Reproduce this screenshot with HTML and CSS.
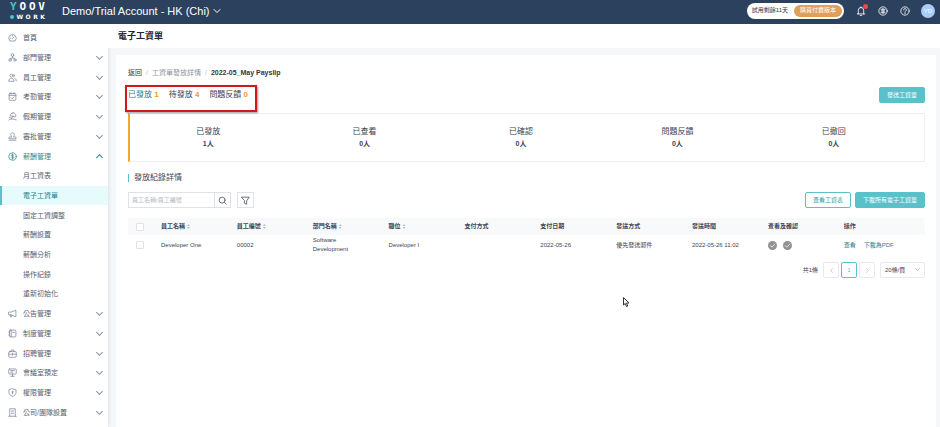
FILE: index.html
```html
<!DOCTYPE html>
<html lang="zh-Hant">
<head>
  <meta charset="UTF-8">
  <meta name="viewport" content="width=device-width, initial-scale=1">
  <title>電子工資單</title>
  <link rel="stylesheet" href="styles.css">
</head>
<body>

<header class="topbar">
  <a class="logo" href="#" aria-label="YOOV WORK">
    <span class="logo-top"><span class="teal">Y</span><span>O</span><span>O</span><span>V</span></span>
    <span class="logo-sub"><i class="dot"></i><span>W</span><span>O</span><span>R</span><span>K</span></span>
  </a>
  <button class="account">Demo/Trial Account - HK (Chi)
    <svg class="arrow" viewBox="0 0 8 8"><path d="M1 2.5l3 3 3-3"/></svg>
  </button>
  <div class="top-right">
    <div class="trial"><span>試用剩餘11天</span><button>購買付費版本</button></div>
    <button class="icon-btn bell" aria-label="通知">
      <svg viewBox="0 0 12 12"><path d="M1.5 9.5h9M2.8 9.5V5a3.2 3.2 0 0 1 6.4 0v4.5M5 11.2h2M6 1v1"/></svg>
      <i class="badge"></i>
    </button>
    <button class="icon-btn lang" aria-label="語言">
      <svg viewBox="0 0 12 12"><circle cx="6" cy="6" r="5"/><path d="M3.6 4h4.8M4 6h4M3.6 8h4.8M6 3v6"/></svg>
    </button>
    <button class="icon-btn" aria-label="說明">
      <svg viewBox="0 0 12 12"><circle cx="6" cy="6" r="5"/><path d="M4.4 4.8a1.6 1.6 0 1 1 2.4 1.3c-.6.4-.8.6-.8 1.2M6 8.3v.9"/></svg>
    </button>
    <span class="avatar">YD</span>
  </div>
</header>

<div class="layout">
  <nav class="sidebar">
    <a class="item" href="#"><svg viewBox="0 0 12 12"><path d="M2.3 10.3a5 5 0 1 1 7.4 0zM6 7.5l2-2.3M3 7h.8M6 3.3v.8"/></svg>首頁</a>
    <a class="item more" href="#"><svg viewBox="0 0 12 12"><circle cx="6" cy="2.7" r="1.8"/><circle cx="2.7" cy="9.3" r="1.6"/><circle cx="9.3" cy="9.3" r="1.6"/><path d="M6 4.5v2M2.7 7.7c0-1.6 6.6-1.6 6.6 0"/></svg>部門管理</a>
    <a class="item more" href="#"><svg viewBox="0 0 12 12"><circle cx="4.5" cy="3.5" r="2"/><path d="M1 10.5c0-4.5 7-4.5 7 0zM7.5 1.7a2 2 0 0 1 0 3.7M9 7c1.5.5 2 2 2 3.5"/></svg>員工管理</a>
    <a class="item more" href="#"><svg viewBox="0 0 12 12"><rect x="1.5" y="2" width="9" height="9" rx="1"/><path d="M1.5 4.5h9M4 .8v2M8 .8v2M4 7.5l1.5 1.5 2.8-2.7"/></svg>考勤管理</a>
    <a class="item more" href="#"><svg viewBox="0 0 12 12"><path d="M3 4.5a3.8 3.8 0 0 1 7-1.5c.8 1.3.5 2.5 0 3.2zM6.5 5.2L4.5 9M1 10.5c1.5-2 3 0 4.5-1s3 1 5.5 1M1.5 7.5h2M7 1l-1 1"/></svg>假期管理</a>
    <a class="item more" href="#"><svg viewBox="0 0 12 12"><path d="M4.8 6.5C2.5 3.5 4 1 6 1s3.5 2.5 1.2 5.5h2.3a1.2 1.2 0 0 1 1.2 1.2V9H1.3V7.7a1.2 1.2 0 0 1 1.2-1.2zM1.5 11h9"/></svg>審批管理</a>
    <a class="item more open" href="#"><svg viewBox="0 0 12 12"><circle cx="6" cy="6" r="5"/><path d="M7.8 4.3C7 3.2 4.3 3.3 4.3 4.8s3.5.9 3.5 2.5-3 1.6-3.7.4M6 2.5v7"/></svg>薪酬管理</a>
    <a class="item sub" href="#">月工資表</a>
    <a class="item sub active" href="#">電子工資單</a>
    <a class="item sub" href="#">固定工資調整</a>
    <a class="item sub" href="#">薪酬設置</a>
    <a class="item sub" href="#">薪酬分析</a>
    <a class="item sub" href="#">操作紀錄</a>
    <a class="item sub" href="#">重新初始化</a>
    <a class="item more" href="#"><svg viewBox="0 0 12 12"><path d="M1 4.2h3l6.500-2.700v9L4 7.800H1zM3 7.800v2.700h2V8.300"/></svg>公告管理</a>
    <a class="item more" href="#"><svg viewBox="0 0 12 12"><rect x="2" y="1.5" width="8.5" height="9" rx="1"/><path d="M4.3 1.5v9M6.500 4.500h2M1 4h1.500M1 8h1.500"/></svg>制度管理</a>
    <a class="item more" href="#"><svg viewBox="0 0 12 12"><rect x="1" y="3.5" width="10" height="7.5" rx="1"/><path d="M4 3.5v-2h4v2M1 7h3M8 7h3M6 5.800v2.400M5 7h2"/></svg>招聘管理</a>
    <a class="item more" href="#"><svg viewBox="0 0 12 12"><rect x="1" y="1.3" width="10" height="6.7" rx="1"/><path d="M6 8v3M3.5 11h5M3.5 3.5h5M3.5 5.5h3"/></svg>會議室預定</a>
    <a class="item more" href="#"><svg viewBox="0 0 12 12"><path d="M6 1l4.7 1.5v3.5c0 2.5-2 4.2-4.7 5.2C3.3 10.2 1.3 8.5 1.3 6V2.5z"/><circle cx="6" cy="5.3" r=".8"/><path d="M6 6.3v1.5"/></svg>權限管理</a>
    <a class="item more" href="#"><svg viewBox="0 0 12 12"><path d="M2.3 11V1h7.4v10M1 11h10M4.5 4h3M4.5 7h3"/></svg>公司/團隊設置</a>
  </nav>

  <main class="main">
    <h1 class="page-title">電子工資單</h1>

    <section class="card">
      <div class="crumbs">
        <a href="#">返回</a><span class="sep">/</span><span class="grey">工資單發放詳情</span><span class="sep">/</span><b>2022-05_May Payslip</b>
      </div>

      <div class="tabs-row">
        <div class="tabs">
          <a class="tab active" href="#">已發放 <b>1</b></a>
          <a class="tab" href="#">待發放 <b>4</b></a>
          <a class="tab" href="#">問題反饋 <b>0</b></a>
          <i class="highlight"></i>
        </div>
        <button class="btn primary">發送工資單</button>
      </div>

      <div class="stats">
        <div class="stat"><span>已發放</span><b>1人</b></div>
        <div class="stat"><span>已查看</span><b>0人</b></div>
        <div class="stat"><span>已確認</span><b>0人</b></div>
        <div class="stat"><span>問題反饋</span><b>0人</b></div>
        <div class="stat"><span>已撤回</span><b>0人</b></div>
      </div>

      <h2 class="section-title">發放紀錄詳情</h2>

      <div class="toolbar">
        <div class="search">
          <input type="text" placeholder="員工名稱/員工編號" aria-label="員工名稱/員工編號">
          <button aria-label="搜尋"><svg viewBox="0 0 12 12"><circle cx="5.5" cy="5.5" r="4"/><path d="M8.5 8.5L11 11"/></svg></button>
        </div>
        <button class="filter" aria-label="篩選"><svg viewBox="0 0 12 12"><path d="M1 1.5h10l-3.5 5V11l-3-1.5v-3z"/></svg></button>
        <div class="actions">
          <button class="btn">查看工資表</button>
          <button class="btn primary">下載所有電子工資單</button>
        </div>
      </div>

      <table class="records">
        <thead>
          <tr>
            <th class="check"><input type="checkbox" aria-label="全選"></th>
            <th>員工名稱<i class="sort"></i></th>
            <th>員工編號<i class="sort"></i></th>
            <th>部門名稱<i class="sort"></i></th>
            <th>職位<i class="sort"></i></th>
            <th>支付方式</th>
            <th>支付日期</th>
            <th>發送方式</th>
            <th>發送時間</th>
            <th>查看及確認</th>
            <th class="ops">操作</th>
          </tr>
        </thead>
        <tbody>
          <tr>
            <td class="check"><input type="checkbox" aria-label="Developer One"></td>
            <td>Developer One</td>
            <td>00002</td>
            <td>Software Development</td>
            <td>Developer I</td>
            <td></td>
            <td>2022-05-26</td>
            <td>優先發送郵件</td>
            <td>2022-05-26 11:02</td>
            <td>
              <div class="ticks">
                <svg viewBox="0 0 12 12"><circle cx="6" cy="6" r="6"/><path d="M3.2 6.2l2 2 3.8-4"/></svg>
                <svg viewBox="0 0 12 12"><circle cx="6" cy="6" r="6"/><path d="M3.2 6.2l2 2 3.8-4"/></svg>
              </div>
            </td>
            <td class="ops"><a href="#">查看</a><a href="#">下載為PDF</a></td>
          </tr>
        </tbody>
      </table>

      <div class="pager">
        <span class="total">共1條</span>
        <button disabled aria-label="上一頁"><svg viewBox="0 0 8 8"><path d="M5.5 1l-3 3 3 3"/></svg></button>
        <button class="current">1</button>
        <button disabled aria-label="下一頁"><svg viewBox="0 0 8 8"><path d="M2.5 1l3 3-3 3"/></svg></button>
        <div class="page-size">
          <select aria-label="每頁條數"><option>20條/頁</option></select>
          <svg class="arrow" viewBox="0 0 8 8"><path d="M1 2.5l3 3 3-3"/></svg>
        </div>
      </div>
    </section>
  </main>
</div>

<svg class="cursor" viewBox="0 0 12 20"><path d="M1 1v14l3.5-3 2.5 6 2.5-1L7 11h4.5z"/></svg>

</body>
</html>
```
FILE: styles.css
```css
* {
  box-sizing: border-box;
}
body {
  margin: 0;
  min-height: 100vh;
  display: flex;
  flex-direction: column;
  font-family: "Liberation Sans", "Noto Sans CJK TC", sans-serif;
  font-size: 6px;
  line-height: 9px;
  color: #3c4453;
  background: #f5f7f9;
}
a {
  color: inherit;
  text-decoration: none;
}
button, input, select {
  font: inherit;
  color: inherit;
  margin: 0;
  padding: 0;
  border: 0;
  background: none;
}
svg {
  fill: none;
  stroke: currentColor;
  stroke-linecap: round;
  stroke-linejoin: round;
  display: block;
  flex: none;
}
.arrow {
  width: 8px;
  height: 8px;
}

/* top bar */
.topbar {
  height: 24px;
  flex: none;
  display: flex;
  align-items: center;
  padding: 0 5px 3px 10px;
  background: #2c415e;
  color: #fff;
}
.logo {
  width: 35px;
  margin-right: 17px;
  font-weight: bold;
}
.logo-top, .logo-sub {
  display: flex;
  align-items: center;
  justify-content: space-between;
}
.logo-top {
  font-family: "DejaVu Sans Mono", monospace;
  font-size: 11px;
  line-height: 12px;
}
.logo-sub {
  font-family: "DejaVu Sans", sans-serif;
  font-size: 6px;
  line-height: 7px;
}
.teal {
  color: #4fc3cf;
}
.dot {
  width: 4px;
  height: 4px;
  border-radius: 50%;
  background: #4fc3cf;
}
.account {
  display: flex;
  align-items: center;
  gap: 3px;
  font-size: 11px;
  line-height: 14px;
}
.top-right {
  margin-left: auto;
  display: flex;
  align-items: center;
  gap: 10px;
}
.trial {
  display: flex;
  align-items: center;
  gap: 6px;
  height: 16px;
  padding: 0 2px 0 5px;
  border-radius: 8px;
  background: #fff;
  color: #2c3444;
}
.trial button {
  height: 12px;
  padding: 0 6px;
  border-radius: 6px;
  background: #dfa05a;
  color: #fff;
}
.icon-btn {
  position: relative;
  width: 12px;
}
.icon-btn svg {
  width: 10px;
  height: 10px;
  margin: 0 auto;
}
.bell {
  margin-left: 1px;
}
.badge {
  position: absolute;
  top: -2px;
  right: -1px;
  width: 5px;
  height: 5px;
  border-radius: 50%;
  background: #f0444c;
}
.avatar {
  width: 14px;
  height: 14px;
  border-radius: 50%;
  background: #a9cdfa;
  font-size: 6px;
  line-height: 14px;
  text-align: center;
}

.layout {
  flex: 1;
  display: flex;
}

/* side menu */
.sidebar {
  width: 108px;
  height: calc(100vh - 24px);
  flex: none;
  display: flex;
  flex-direction: column;
  padding: 4px 0 5px;
  background: #fff;
  box-shadow: 0 0 4px rgba(40, 60, 90, 0.18);
  font-size: 7px;
  color: #56606d;
}
.item {
  height: 20px;
  min-height: 18px;
  display: flex;
  align-items: center;
  gap: 6px;
  padding: 0 6px 0 8px;
}
.item svg {
  width: 9px;
  height: 9px;
  color: #7c8795;
}
.more::after {
  content: "";
  width: 4px;
  height: 4px;
  margin: -2px 0 0 auto;
  border: solid #8b95a2;
  border-width: 0 1px 1px 0;
  transform: rotate(45deg);
}
.open, .open svg {
  color: #2f8b92;
}
.open::after {
  margin-top: 2px;
  border-color: #2f8b92;
  transform: rotate(225deg);
}
.sub {
  padding-left: 23px;
}
.active.sub {
  padding-left: 21px;
  border-left: 2px solid #5ac1cb;
  background: #e6fcfc;
  color: #1f7f87;
}

/* content */
.main {
  flex: 1;
  min-width: 0;
  display: flex;
  flex-direction: column;
}
.page-title {
  margin: 0;
  padding: 0 10px;
  background: #fff;
  font-size: 9px;
  line-height: 24px;
  color: #1f2532;
}
.card {
  flex: 1;
  margin: 7px 4px 0 8px;
  padding: 12px 11px 0 12px;
  background: #fff;
}
.crumbs {
  display: flex;
  font-size: 7px;
  line-height: 11px;
  color: #2f3746;
}
.sep {
  margin: 0 4px;
  color: #c0c4ca;
}
.grey {
  color: #8f959d;
}
.tabs-row {
  display: flex;
  align-items: center;
  justify-content: space-between;
  margin-top: 9px;
}
.tabs {
  position: relative;
  display: flex;
  gap: 10px;
  font-size: 8px;
  line-height: 12px;
}
.tab b {
  color: #f7981d;
}
.tab.active {
  color: #1f7f87;
}
.highlight {
  position: absolute;
  inset: -4px -9px -11px -3px;
  border: 2px solid #d0181f;
  box-shadow: 1px 1px 2px rgba(0, 0, 0, 0.4);
}
.btn {
  height: 16px;
  padding: 0 7px;
  border: 1px solid #5ac1cb;
  border-radius: 2px;
  background: #fff;
  color: #2f9aa4;
}
.btn.primary {
  background: #5ac1cb;
  color: #fff;
}
.stats {
  display: flex;
  margin-top: 10px;
  padding: 12px 12px 12px 0;
  border: 1px solid #eceff2;
  border-left: 2px solid #f5a52c;
}
.stat {
  flex: 1;
  display: flex;
  flex-direction: column;
  align-items: center;
  font-size: 8px;
  line-height: 12px;
}
.stat b {
  font-size: 7px;
  line-height: 11px;
}
.section-title {
  margin: 12px 0 10px;
  padding-left: 5px;
  border-left: 1px solid #4fc3cf;
  font-size: 8px;
  font-weight: normal;
  line-height: 8px;
}
.toolbar {
  display: flex;
  gap: 6px;
}
.search {
  width: 103px;
  display: flex;
  border: 1px solid #dfe3e8;
}
.search input {
  flex: 1;
  min-width: 0;
  padding: 0 3px;
}
.search input::placeholder {
  color: #b4b9c0;
}
.search button {
  width: 16px;
  border-left: 1px solid #dfe3e8;
}
.search svg, .filter svg {
  width: 9px;
  height: 9px;
  margin: 0 auto;
}
.filter {
  width: 17px;
  height: 16px;
  border: 1px solid #dfe3e8;
}
.actions {
  display: flex;
  gap: 4px;
  margin-left: auto;
}

/* records */
.records {
  width: 100%;
  margin-top: 10px;
  table-layout: fixed;
  border-collapse: collapse;
}
.records th, .records td {
  width: 9.52%;
  padding: 0 8px;
  text-align: left;
  white-space: nowrap;
}
.records td:nth-child(4) {
  white-space: normal;
}
.records th {
  height: 17px;
  background: #f7f9fa;
}
.records td {
  height: 20px;
}
.records .check {
  width: 25px;
}
.records .ops {
  width: auto;
}
.records input {
  appearance: none;
  display: block;
  width: 8px;
  height: 8px;
  border: 1px solid #dfe3e8;
  border-radius: 1px;
  background: #fff;
}
.sort {
  display: inline-block;
  width: 3px;
  height: 5px;
  margin-left: 2px;
  vertical-align: middle;
  background: #b9bfc7;
  clip-path: polygon(50% 0, 100% 40%, 0 40%, 0 60%, 100% 60%, 50% 100%, 0 60%, 0 40%);
}
.ticks {
  display: flex;
  gap: 6px;
}
.ticks svg {
  width: 9px;
  height: 9px;
  stroke: #fff;
}
.ticks circle {
  fill: #929292;
  stroke: none;
}
.ops a {
  margin-right: 8px;
  color: #1f7f87;
}

.pager {
  display: flex;
  align-items: center;
  justify-content: flex-end;
  gap: 2px;
  margin-top: 7px;
}
.total {
  margin-right: 3px;
}
.pager button {
  width: 16px;
  height: 16px;
  border: 1px solid #e6e9ed;
  border-radius: 2px;
  color: #a9afb8;
}
.pager button svg {
  width: 5px;
  height: 5px;
  margin: 0 auto;
}
.pager .current {
  border-color: #5ac1cb;
  color: #5ac1cb;
}
.page-size {
  position: relative;
  margin-left: 3px;
}
.page-size select {
  appearance: none;
  width: 45px;
  height: 16px;
  padding: 0 4px;
  border: 1px solid #e6e9ed;
  border-radius: 2px;
}
.page-size .arrow {
  position: absolute;
  top: 5px;
  right: 5px;
  width: 5px;
  height: 5px;
  color: #8f959d;
}

/* mouse pointer */
.cursor {
  position: absolute;
  left: 623px;
  top: 297px;
  width: 6px;
  height: 11px;
  fill: #fff;
  stroke: #333;
  stroke-width: 2;
}
```
